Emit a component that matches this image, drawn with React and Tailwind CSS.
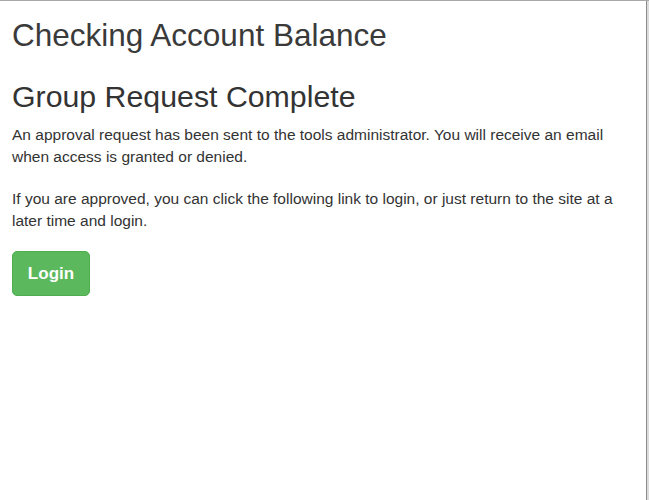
import React from "react";

// Group request confirmation page
export default function App() {
  return (
    <div
      className="flex h-[500px] w-[649px] border-t border-[#a8a8a8] bg-[#dcdcdc]"
      style={{ fontFamily: '"Liberation Sans", Arial, sans-serif' }}
    >
      <div className="h-full w-[647px] border-r border-[#8c8c8c] bg-white px-3 pt-4 text-[#333]">
        <h1 className="text-[31.5px] leading-[36px] font-normal text-[#3a3a3a]">
          Checking Account Balance
        </h1>

        <h2 className="mt-[26px] text-[30.3px] leading-[36px] font-normal">
          Group Request Complete
        </h2>

        <p className="mt-[9px] text-[15.5px] leading-[22px]">
          An approval request has been sent to the tools administrator. You will receive an email
          <br />
          when access is granted or denied.
        </p>

        <p className="mt-[20px] text-[15.5px] leading-[22px]">
          If you are approved, you can click the following link to login, or just return to the site at a
          <br />
          later time and login.
        </p>

        <button className="mt-[19px] h-[45px] w-[78px] rounded-[5px] border border-[#4cae4c] bg-[#5cb85c] text-[17px] font-semibold text-white">
          Login
        </button>
      </div>
    </div>
  );
}
